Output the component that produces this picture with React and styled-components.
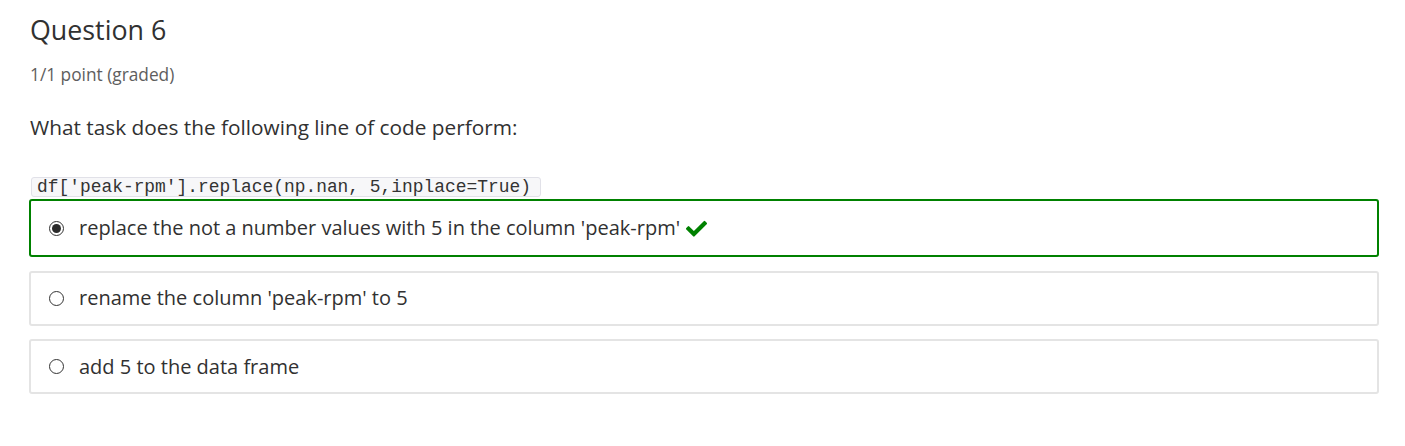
import React from "react";
import styled, { createGlobalStyle } from "styled-components";

const Global = createGlobalStyle`
  html, body { margin: 0; padding: 0; background: #fff; }
  body { font-family: "Open Sans", "Noto Sans", sans-serif; color: #313131; }
`;

const Page = styled.div`
  padding: 13px 26px 0 29px;
`;

const Title = styled.h3`
  margin: 0 0 0 1px;
  font-size: 26.8px;
  font-weight: 400;
  line-height: 34px;
  color: #313131;
`;

const Points = styled.div`
  margin: 16px 0 0 1px;
  font-size: 17.3px;
  line-height: 24px;
  color: #5e5e5e;
`;

const Prompt = styled.p`
  margin: 25px 0 0 1px;
  font-size: 20.8px;
  line-height: 30px;
`;

const Code = styled.code`
  display: inline-block;
  margin: 35px 0 0 2px;
  padding: 0 9px 0 5px;
  font-family: "Liberation Mono", "Courier New", monospace;
  font-size: 17.9px;
  line-height: 18px;
  color: #333;
  background: #f7f7f9;
  border: 1px solid #e1e1e8;
  border-radius: 3px;
`;

const Options = styled.div`
  display: flex;
  flex-direction: column;
  gap: 13.5px;
  margin-top: 2px;
`;

const Option = styled.label`
  display: flex;
  align-items: center;
  gap: 15px;
  padding: ${(p) => (p.$correct ? "12px 18px" : "10.5px 18px")};
  border: 2px solid ${(p) => (p.$correct ? "#008100" : "#e4e4e4")};
  border-radius: 3px;
  font-size: 20px;
  line-height: 30px;
  color: #313131;
`;

const Radio = styled.span`
  box-sizing: border-box;
  width: 15px;
  height: 15px;
  border-radius: 50%;
  border: 1.2px solid #333;
  background: #fff;
  display: flex;
  align-items: center;
  justify-content: center;
  flex: none;
  &::after {
    content: "";
    display: ${(p) => (p.$checked ? "block" : "none")};
    width: 9px;
    height: 9px;
    border-radius: 50%;
    background: #2b2b2b;
  }
`;

const Check = styled.svg`
  width: 21px;
  height: 18px;
  margin-left: 6px;
  vertical-align: -2px;
  fill: #008100;
`;

const options = [
  { text: "replace the not a number values with 5 in the column 'peak-rpm'", correct: true },
  { text: "rename the column 'peak-rpm' to 5" },
  { text: "add 5 to the data frame" },
];

export default function App() {
  return (
    <Page>
      <Global />
      <Title>Question 6</Title>
      <Points>1/1 point (graded)</Points>
      <Prompt>What task does the following line of code perform:</Prompt>
      <Code>df['peak-rpm'].replace(np.nan, 5,inplace=True)</Code>
      <Options>
        {options.map((o) => (
          <Option key={o.text} $correct={o.correct}>
            <Radio $checked={o.correct} />
            <span>
              {o.text}
              {o.correct && (
                <Check viewBox="0 0 512 420">
                  <path d="M173.9 411.3 7.5 244.9a25.6 25.6 0 0 1 0-36.2l36.2-36.2a25.6 25.6 0 0 1 36.2 0L192 284.6 432.1 44.5a25.6 25.6 0 0 1 36.2 0l36.2 36.2a25.6 25.6 0 0 1 0 36.2L210.1 411.3a25.6 25.6 0 0 1-36.2 0z" />
                </Check>
              )}
            </span>
          </Option>
        ))}
      </Options>
    </Page>
  );
}
